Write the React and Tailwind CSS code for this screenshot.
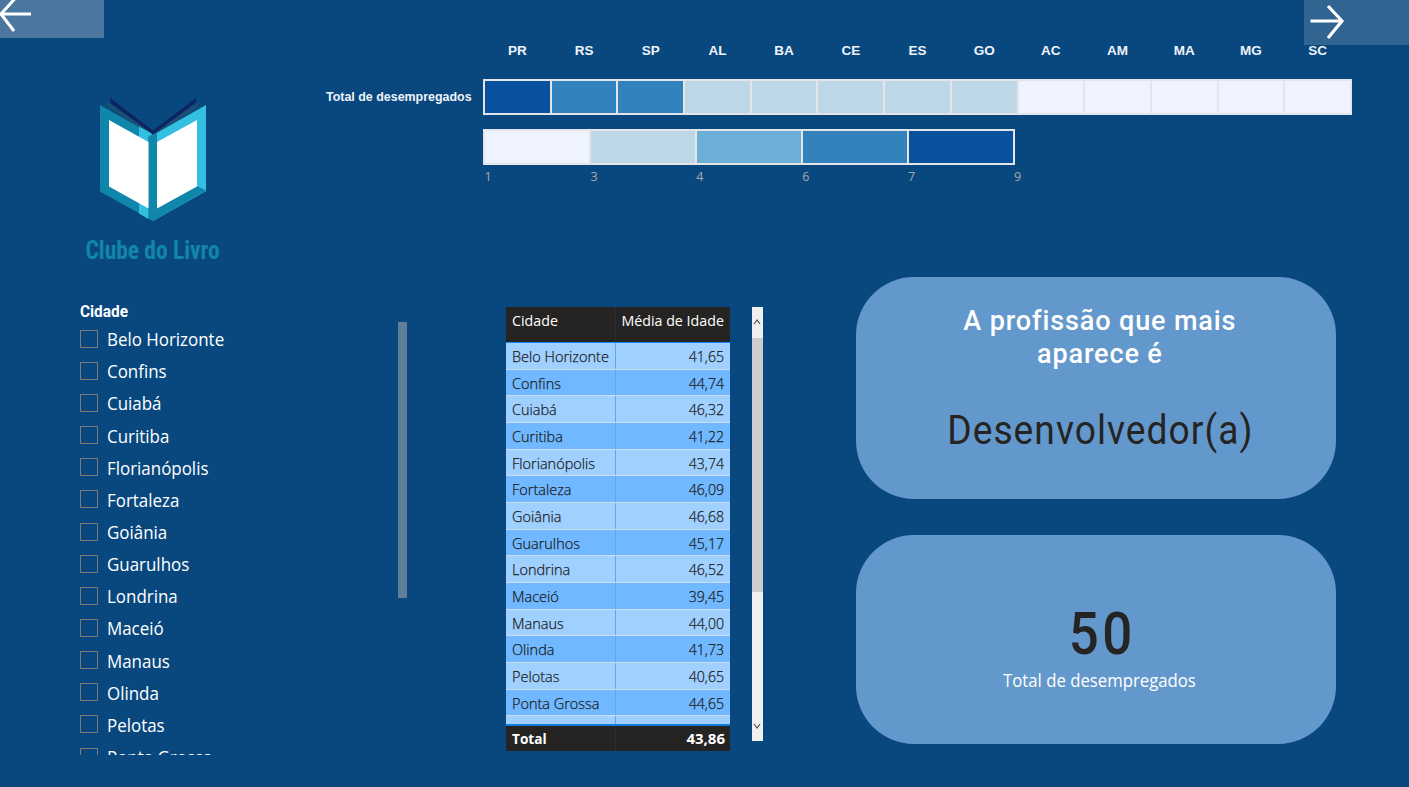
const states = ["PR", "RS", "SP", "AL", "BA", "CE", "ES", "GO", "AC", "AM", "MA", "MG", "SC"];
const cellColors = [
  "bg-[#08519c]", "bg-[#3182bd]", "bg-[#3182bd]",
  "bg-[#bdd7e7]", "bg-[#bdd7e7]", "bg-[#bdd7e7]", "bg-[#bdd7e7]", "bg-[#bdd7e7]",
  "bg-[#eff3ff]", "bg-[#eff3ff]", "bg-[#eff3ff]", "bg-[#eff3ff]", "bg-[#eff3ff]",
];
const legend = [
  ["1", "bg-[#eff3ff]"], ["3", "bg-[#bdd7e7]"], ["4", "bg-[#6baed6]"], ["6", "bg-[#3182bd]"], ["7", "bg-[#08519c]"],
];
const rows = [
  ["Belo Horizonte", "41,65"], ["Confins", "44,74"], ["Cuiabá", "46,32"], ["Curitiba", "41,22"],
  ["Florianópolis", "43,74"], ["Fortaleza", "46,09"], ["Goiânia", "46,68"], ["Guarulhos", "45,17"],
  ["Londrina", "46,52"], ["Maceió", "39,45"], ["Manaus", "44,00"], ["Olinda", "41,73"],
  ["Pelotas", "40,65"], ["Ponta Grossa", "44,65"],
];

function NavButtons() {
  return (
    <>
      <button className="absolute left-0 top-0 flex h-[37.5px] w-[104px] items-start bg-[#4b76a0]">
        <svg width="40" height="37" viewBox="0 0 40 37" fill="none" stroke="#fff" strokeWidth="3">
          <path d="M31 14H1.500M15.500 -2L1 14L14 31" />
        </svg>
      </button>
      <button className="absolute right-0 top-0 flex h-[44.5px] w-[105px] items-start bg-[#316491]">
        <svg width="50" height="44" viewBox="0 0 50 44" fill="none" stroke="#fff" strokeWidth="3.2">
          <path d="M6.500 21H38M24 6L38 21L24 38" />
        </svg>
      </button>
    </>
  );
}

function Logo() {
  return (
    <div className="flex w-[306px] flex-col items-center pt-[96px]">
      <svg width="112" height="128" viewBox="97 96 112 128">
        <path d="M106 101L153 133.500L200 101L198 107L153 137L108 107Z" fill="#1b4f74" />
        <path d="M100 105L153 135V221L100 191.500Z" fill="#1186ab" />
        <path d="M139 126.500L153 134L148.500 137V219L139 213.500Z" fill="#33bfe2" />
        <path d="M153 135L206 105V191L153 221Z" fill="#33bfe2" />
        <path d="M197 186L206 190.500L153 221V208Z" fill="#1186ab" />
        <path d="M148.500 136.500L153 134L157 133V219L153 221L148.500 218Z" fill="#1186ab" />
        <path d="M110 98L153 130.500L196 98V102.500L153 134.500L110 102.500Z" fill="#0c2461" />
        <path d="M109 120L148.500 142V208.500L109 186.500Z" fill="#fff" />
        <path d="M157 142L197 120V186.500L157 208.500Z" fill="#fff" />
      </svg>
      <div className="mt-[10px] scale-x-[0.9] whitespace-nowrap font-[Roboto,sans-serif] text-[26px] font-bold leading-[32px] text-[#1186ab] font-stretch-75%">
        Clube do Livro
      </div>
    </div>
  );
}

function Heatmap() {
  return (
    <div className="w-[1046px] pt-[42px] font-['Liberation_Sans',sans-serif]">
      <div className="ml-[178px] flex w-[867px] text-[13.5px] font-bold leading-[18px] text-[#eef3f9]">
        {states.map((s) => <div key={s} className="flex-1 text-center">{s}</div>)}
      </div>
      <div className="mt-[19px] flex items-center">
        <div className="w-[177px] whitespace-nowrap pl-[20px] text-[12.450px] font-bold text-[#eef3f9]">Total de desempregados</div>
        <div className="flex h-[36px] w-[869px] gap-[2px] border-2 border-[#e3e5e8] bg-[#e3e5e8]">
          {cellColors.map((c, i) => <div key={i} className={`flex-1 ${c}`} />)}
        </div>
      </div>
      <div className="ml-[177px] mt-[14px] flex h-[36px] w-[532px] gap-[2px] border-2 border-[#e3e5e8] bg-[#e3e5e8]">
        {legend.map(([n, c]) => <div key={n} className={`flex-1 ${c}`} />)}
      </div>
      <div className="ml-[178.500px] mt-[3px] flex font-['Open_Sans',sans-serif] text-[12.500px] leading-[18px] text-[#a9a9a9]">
        {[...legend.map(([n]) => n), "9"].map((n) => <div key={n} className="w-[105.900px]">{n}</div>)}
      </div>
    </div>
  );
}

function Slicer() {
  return (
    <div className="flex w-[426px] pl-[80px] pt-[26px]">
      <div className="h-[452px] w-[318px] overflow-hidden">
        <div className="mb-[2px] h-[18px] origin-left scale-x-[0.96] font-[Roboto,sans-serif] text-[16px] font-bold leading-[18px] text-white">Cidade</div>
        {rows.map(([city]) => (
          <div key={city} className="flex h-[32.170px] items-center gap-[9px]">
            <span className="mb-[1px] size-[18px] shrink-0 border border-[#7b7a7c]" />
            <span className="origin-left scale-x-[0.94] whitespace-nowrap font-['Open_Sans',sans-serif] text-[18px] leading-[24px] text-white">{city}</span>
          </div>
        ))}
      </div>
      <div className="mt-[19px] h-[276px] w-[9px] bg-[#5f7e98]" />
    </div>
  );
}

function AgeTable() {
  return (
    <div className="flex w-[430px] pl-[80px] pt-[30px] font-['Open_Sans',sans-serif] text-[15px]">
      <div className="w-[224px]">
        <div className="flex h-[36px] border-b border-[#118dff] bg-[#252423] text-white">
          <div className="w-[110px] border-r border-[#1f303f] pl-[6px] pt-[2px] leading-[22px]">
            <div className="origin-left scale-x-[0.95]">Cidade</div>
          </div>
          <div className="flex flex-1 justify-end whitespace-nowrap pr-[6px] pt-[2px] leading-[22px]">
            <div className="origin-right scale-x-[0.95]">Média de Idade</div>
          </div>
        </div>
        <div className="h-[380.500px] overflow-hidden font-light text-[#1c1c1c] [-webkit-text-stroke:0.25px_#1c1c1c]">
          {[...rows, ["", ""]].map(([city, age], i) => (
            <div key={i} className={`flex h-[26.680px] border-b border-[#cbdceb] leading-[26px] ${i % 2 ? "bg-[#70b8ff]" : "bg-[#a0d0ff]"}`}>
              <div className="w-[110px] whitespace-nowrap border-r border-[#69a4de] pl-[6px]">
                <div className="origin-left scale-x-[0.965]">{city}</div>
              </div>
              <div className="flex-1 pr-[6px] text-right">
                <div className="origin-right scale-x-[0.94]">{age}</div>
              </div>
            </div>
          ))}
        </div>
        <div className="flex h-[27.500px] border-t-2 border-[#1379dc] bg-[#252423] font-bold leading-[24px] text-white">
          <div className="w-[110px] border-r border-[#1f303f] pl-[6px]">
            <div className="origin-left scale-x-[0.91]">Total</div>
          </div>
          <div className="flex-1 pr-[5px] text-right">43,86</div>
        </div>
      </div>
      <div className="ml-[22px] flex h-[434px] w-[10.500px] flex-col items-center bg-[#f0f0f0]">
        <svg width="10" height="31" viewBox="0 0 10 31" fill="none" stroke="#505050" strokeWidth="1.200"><path d="M2 17L5 13L8 17" /></svg>
        <div className="h-[254px] w-full bg-[#cdcdcd]" />
        <svg className="mt-auto" width="10" height="29" viewBox="0 0 10 29" fill="none" stroke="#505050" strokeWidth="1.200"><path d="M2 12L5 16L8 12" /></svg>
      </div>
    </div>
  );
}

function Cards() {
  return (
    <div className="flex w-[479.500px] flex-col gap-[36px]">
      <div className="flex h-[222px] flex-col items-center rounded-[58px] bg-[#6398cc] pt-[27px] text-center font-[Roboto,sans-serif]">
        <div className="w-[310px] scale-x-[0.965] pl-[8px] text-[28px] font-medium leading-[33px] tracking-[0.900px] text-white">A profissão que mais aparece é</div>
        <div className="mt-[37px] scale-x-[0.93] pl-[9px] text-[40px] leading-[48px] tracking-[1.100px] text-[#252423]">Desenvolvedor(a)</div>
      </div>
      <div className="flex h-[209px] flex-col items-center rounded-[58px] bg-[#6398cc] pt-[64px]">
        <div className="scale-x-[0.88] pl-[15px] font-[Roboto,sans-serif] text-[60px] font-medium leading-[70px] tracking-[4px] text-[#252423]">50</div>
        <div className="scale-x-[0.93] pl-[7px] font-['Open_Sans',sans-serif] text-[18px] leading-[23px] text-white">Total de desempregados</div>
      </div>
    </div>
  );
}

export default function App() {
  return (
    <div className="relative h-[787px] w-[1409px] overflow-hidden bg-[#09487f]">
      <div className="flex h-[277px]">
        <Logo />
        <Heatmap />
      </div>
      <div className="flex">
        <Slicer />
        <AgeTable />
        <Cards />
      </div>
      <NavButtons />
    </div>
  );
}
